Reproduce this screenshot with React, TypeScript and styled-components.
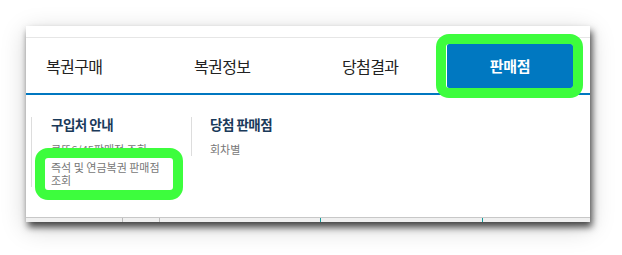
import React from "react";
import styled, { createGlobalStyle } from "styled-components";

const Global = createGlobalStyle`
  html, body { margin: 0; padding: 0; background: #ffffff; }
  body { font-family: "Noto Sans CJK KR", "Noto Sans", sans-serif; }
`;

const Page = styled.div`
  width: 622px;
  height: 255px;
  padding: 26px 0 0 26px;
  box-sizing: border-box;
  overflow: hidden;
`;

const Window = styled.div`
  position: relative;
  width: 564px;
  height: 196px;
  background: #ffffff;
  display: flex;
  flex-direction: column;
  box-shadow: 2px 5px 7px rgba(0, 0, 0, 0.7), 0 6px 24px rgba(0, 0, 0, 0.18);
`;

const TopStrip = styled.div`
  height: 11px;
  border-bottom: 1px solid #e6e6e6;
`;

const Nav = styled.nav`
  height: 55px;
  display: grid;
  grid-template-columns: 148px 148px 105px 126px;
  padding-left: 20px;
  align-items: center;
  border-bottom: 2px solid #0077c0;
`;

const Tab = styled.a`
  font-size: 16px;
  letter-spacing: -0.6px;
  color: #222222;
  line-height: 20px;
`;

const ActiveTab = styled.a`
  height: 44px;
  background: #0078c1;
  border-radius: 2px;
  color: #ffffff;
  font-size: 15px;
  font-weight: 700;
  letter-spacing: -0.3px;
  display: flex;
  align-items: center;
  justify-content: center;
`;

const Panel = styled.div`
  height: 122px;
  box-sizing: border-box;
  padding: 22px 0 0 5px;
  display: flex;
  align-items: flex-start;
`;

const Column = styled.div<{ $pad: number }>`
  width: 160px;
  box-sizing: border-box;
  border-left: 1px solid #dddddd;
  padding-left: ${(p) => p.$pad}px;
  padding-right: 26px;
  display: flex;
  flex-direction: column;
  gap: 5px;
`;

const ColTitle = styled.div`
  font-size: 13.5px;
  font-weight: 700;
  letter-spacing: -0.5px;
  line-height: 14px;
  color: #1a3a5a;
  margin-bottom: 7px;
`;

const Item = styled.div`
  font-size: 11px;
  letter-spacing: 0;
  line-height: 13px;
  color: #777777;
`;

const BottomStrip = styled.div`
  height: 5px;
  display: flex;
`;

const Cell = styled.div<{ $w: number; $line?: string }>`
  width: ${(p) => p.$w}px;
  flex: none;
  border-top: 1px solid #c8c8c8;
  background: #f0f0f0;
  ${(p) => (p.$line ? `box-shadow: inset 1px 0 0 ${p.$line};` : "")}
`;

const Highlight = styled.div<{ $x: number; $y: number; $w: number; $h: number }>`
  position: absolute;
  left: ${(p) => p.$x}px;
  top: ${(p) => p.$y}px;
  width: ${(p) => p.$w}px;
  height: ${(p) => p.$h}px;
  box-sizing: border-box;
  border: 10px solid #3dfd3d;
  border-radius: 13px;
  pointer-events: none;
`;

export default function App() {
  return (
    <Page>
      <Global />
      <Window>
        <TopStrip />
        <Nav>
          <Tab>복권구매</Tab>
          <Tab>복권정보</Tab>
          <Tab>당첨결과</Tab>
          <ActiveTab>판매점</ActiveTab>
        </Nav>
        <Panel>
          <Column $pad={19}>
            <ColTitle>구입처 안내</ColTitle>
            <Item>로또6/45판매점 조회</Item>
            <Item>즉석 및 연금복권 판매점 조회</Item>
          </Column>
          <Column $pad={18}>
            <ColTitle>당첨 판매점</ColTitle>
            <Item>회차별</Item>
          </Column>
        </Panel>
        <BottomStrip>
          <Cell $w={96} />
          <Cell $w={37} $line="#bbbbbb" />
          <Cell $w={161} $line="#bbbbbb" />
          <Cell $w={162} $line="#129b9b" />
          <Cell $w={108} $line="#129b9b" />
        </BottomStrip>
        <Highlight $x={410} $y={8} $w={147} $h={64} />
        <Highlight $x={9} $y={122} $w={148} $h={52} />
      </Window>
    </Page>
  );
}
